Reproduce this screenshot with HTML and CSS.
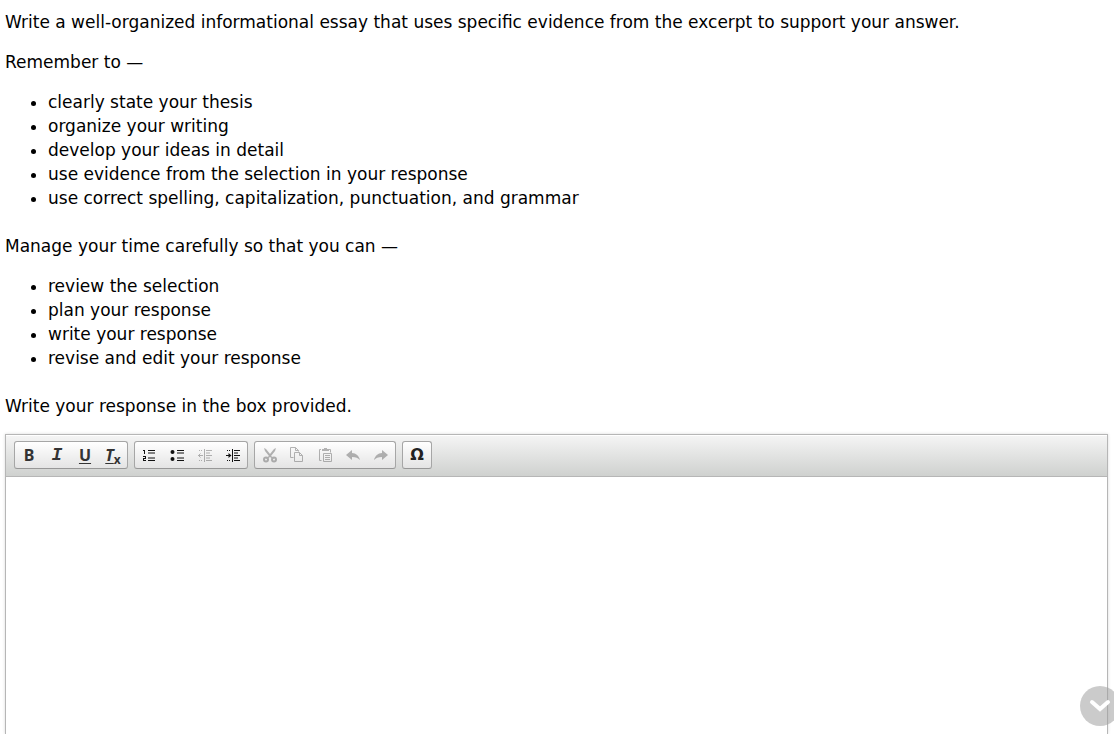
FILE: index.html
```html
<!DOCTYPE html>
<html lang="en">
<head>
    <meta charset="UTF-8">
    <meta name="viewport" content="width=device-width, initial-scale=1.0">
    <title>Essay Response</title>
    <link rel="stylesheet" href="styles.css">
</head>
<body>
    <main class="question">
        <p>Write a well-organized informational essay that uses specific evidence from the excerpt to support your answer.</p>
        <p>Remember to —</p>
        <ul>
            <li>clearly state your thesis</li>
            <li>organize your writing</li>
            <li>develop your ideas in detail</li>
            <li>use evidence from the selection in your response</li>
            <li>use correct spelling, capitalization, punctuation, and grammar</li>
        </ul>
        <p>Manage your time carefully so that you can —</p>
        <ul>
            <li>review the selection</li>
            <li>plan your response</li>
            <li>write your response</li>
            <li>revise and edit your response</li>
        </ul>
        <p><label for="response">Write your response in the box provided.</label></p>

        <div class="editor">
            <div class="toolbar" role="toolbar" aria-label="Formatting">
                <div class="tool-group">
                    <button type="button" class="tool bold">B</button>
                    <button type="button" class="tool italic">I</button>
                    <button type="button" class="tool underline">U</button>
                    <button type="button" class="tool clear"><span class="slant">T</span><span class="sub">x</span></button>
                </div>
                <div class="tool-group">
                    <button type="button" class="tool" aria-label="Numbered list">
                        <svg viewBox="0 0 16 16">
                            <path d="M2 3.5h2M3.5 3v4M2 9.5h3M4.5 9v3M2 11.5h3M2.5 11v3M2 13.5h3"/>
                            <path d="M7 3.5h7M7 6h7M7 11h7M7 13.5h7"/>
                        </svg>
                    </button>
                    <button type="button" class="tool" aria-label="Bulleted list">
                        <svg viewBox="0 0 16 16">
                            <circle class="solid" cx="3.5" cy="5" r="2"/>
                            <circle class="solid" cx="3.5" cy="12" r="2"/>
                            <path d="M8 3.5h7M8 6h7M8 11h7M8 13.5h7"/>
                        </svg>
                    </button>
                    <button type="button" class="tool" aria-label="Decrease indent" disabled>
                        <svg viewBox="0 0 16 16">
                            <path d="M1 8.5h5M3.5 6.5l-2 2 2 2M2 3.5h1M4 3.5h1M2 13.5h1M4 13.5h1"/>
                            <path d="M7.5 2v13M9 3.5h6M9 6h4M9 8.5h6M9 11h4M9 13.5h6"/>
                        </svg>
                    </button>
                    <button type="button" class="tool" aria-label="Increase indent">
                        <svg viewBox="0 0 16 16">
                            <path d="M1 8.5h4M2 3.5h1M4 3.5h1M2 13.5h1M4 13.5h1"/>
                            <path class="solid" d="M3.5 6l3 2.5-3 2.5z"/>
                            <path d="M7.5 2v13M9 3.5h6M9 6h4M9 8.5h6M9 11h4M9 13.5h6"/>
                        </svg>
                    </button>
                </div>
                <div class="tool-group">
                    <button type="button" class="tool" aria-label="Cut" disabled>
                        <svg viewBox="0 0 16 16">
                            <path class="solid" d="M3 1l2 1 4 5 4-5 2-1-1 3-4 5 3 2-1 1-3-2-3 2-1-1 3-2-4-5z"/>
                            <circle class="ring" cx="5" cy="12.5" r="2"/>
                            <circle class="ring" cx="13" cy="12.5" r="2"/>
                        </svg>
                    </button>
                    <button type="button" class="tool" aria-label="Copy" disabled>
                        <svg viewBox="0 0 16 16">
                            <path d="M4.5 10.5h-3v-10h5l3 3v1M6.5 .5v3h3"/>
                            <path d="M5.5 5.5h5l3 3v6h-8zM10.5 5.5v3h3"/>
                        </svg>
                    </button>
                    <button type="button" class="tool" aria-label="Paste" disabled>
                        <svg viewBox="0 0 16 16">
                            <path d="M4 2.5h-1.5v11h2M12 2.5h1.5v3"/>
                            <path class="solid" d="M5 2h2V1h3v1h2v2H5z"/>
                            <path d="M6.5 6.5h8v8h-8zM8 8.5h5M8 10.5h5M8 12.5h5"/>
                        </svg>
                    </button>
                    <button type="button" class="tool" aria-label="Undo" disabled>
                        <svg viewBox="0 0 16 16">
                            <path class="solid" d="M1 8l6-5v3c4 0 7 3 8 7-2-2-4-3-8-3v3z"/>
                        </svg>
                    </button>
                    <button type="button" class="tool" aria-label="Redo" disabled>
                        <svg viewBox="0 0 16 16">
                            <path class="solid" d="M15 8L9 3v3c-4 0-7 3-8 7 2-2 4-3 8-3v3z"/>
                        </svg>
                    </button>
                </div>
                <div class="tool-group">
                    <button type="button" class="tool omega">Ω</button>
                </div>
            </div>
            <textarea id="response" class="response"></textarea>
        </div>
    </main>

    <button type="button" class="scroll-down" aria-label="Scroll down">
        <svg viewBox="0 0 40 40"><path d="M12 16l8 7 8-7"/></svg>
    </button>
</body>
</html>
```

FILE: styles.css
```css
* {
    box-sizing: border-box;
}

body {
    margin: 0;
    height: 100vh;
    overflow: hidden;
    font-family: Verdana, "DejaVu Sans", sans-serif;
    font-size: 17px;
    line-height: 24px;
    color: #000;
    background: #fff;
}

.question {
    display: flex;
    flex-direction: column;
    height: 100%;
    padding: 10px 6px 0 5px;
}

.question p {
    margin: 0 0 16px;
}

.question ul {
    margin: 0 0 24px;
    padding-left: 43px;
}

.editor {
    flex: 1;
    display: flex;
    flex-direction: column;
    min-height: 200px;
    border: 1px solid #b6b6b6;
    border-bottom: 0;
    box-shadow: 0 0 3px rgba(0, 0, 0, 0.15);
}

.toolbar {
    display: flex;
    flex-wrap: wrap;
    gap: 6px;
    padding: 6px 8px 7px;
    border-bottom: 1px solid #b6b6b6;
    background: linear-gradient(to bottom, #f5f5f5, #cfd1cf);
    box-shadow: inset 0 1px 0 #fff;
}

.tool-group {
    display: flex;
    border: 1px solid #a6a6a6;
    border-bottom-color: #979797;
    border-radius: 3px;
    background: linear-gradient(to bottom, #fff, #e4e4e4);
}

.tool {
    display: flex;
    align-items: center;
    justify-content: center;
    width: 28px;
    height: 26px;
    padding: 0;
    border: 0;
    background: none;
    font-family: "Noto Sans", sans-serif;
    font-size: 16px;
    font-weight: 700;
    line-height: 16px;
    color: #333;
    cursor: pointer;
}

.tool:disabled {
    color: #333;
    opacity: 0.35;
    cursor: default;
}

.tool svg {
    width: 16px;
    height: 16px;
    fill: none;
    stroke: currentColor;
}

.tool:enabled svg {
    color: #111;
}

.tool .solid {
    fill: currentColor;
    stroke: none;
}

.tool .ring {
    stroke-width: 2;
}

.italic {
    font-family: "Liberation Mono", monospace;
    font-size: 18px;
    font-style: italic;
}

.underline,
.slant {
    text-decoration: underline;
    text-underline-offset: 2px;
}

.slant {
    font-style: italic;
}

.sub {
    align-self: flex-end;
    font-size: 12px;
}

.omega {
    font-family: "DejaVu Sans", sans-serif;
    font-size: 16px;
    color: #222;
}

.response {
    flex: 1;
    width: 100%;
    padding: 20px;
    border: 0;
    outline: 0;
    resize: none;
    font: inherit;
}

/* Floats over the page edge */
.scroll-down {
    position: fixed;
    right: -6px;
    bottom: 8px;
    width: 40px;
    height: 40px;
    padding: 0;
    border: 0;
    border-radius: 50%;
    background: rgba(160, 160, 160, 0.55);
    cursor: pointer;
}

.scroll-down svg {
    display: block;
    fill: none;
    stroke: #fff;
    stroke-width: 4;
    stroke-linecap: round;
}
```
